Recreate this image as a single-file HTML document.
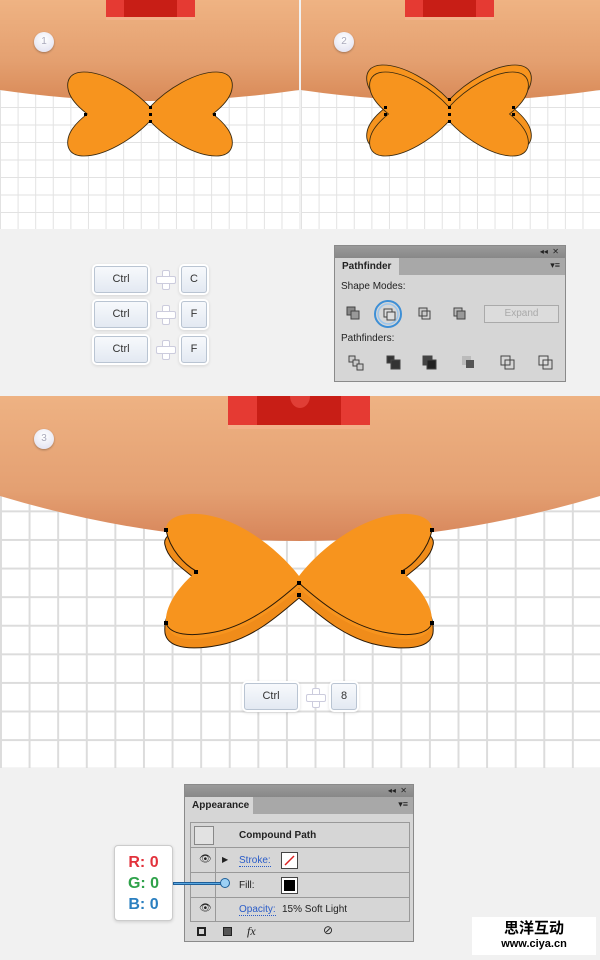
<!DOCTYPE html>
<html><head><meta charset="utf-8"><style>
*{margin:0;padding:0;box-sizing:border-box}
body{width:600px;height:960px;background:#f1f1f1;font-family:"Liberation Sans",Arial,sans-serif;position:relative;overflow:hidden}
.grid{position:absolute;background-color:#fff;background-image:linear-gradient(#e2e2e2 1px,transparent 1px),linear-gradient(90deg,#e2e2e2 1px,transparent 1px);background-size:17.6px 17.5px;background-position:0 2px}
.grid3{position:absolute;background-color:#fff;background-image:linear-gradient(#dcdcdc 2px,transparent 2px),linear-gradient(90deg,#dcdcdc 2px,transparent 2px);background-size:28.6px 28.6px;background-position:0 0}
.key{position:absolute;height:27px;background:linear-gradient(#f7f9fc,#e3e9f2);border:1px solid #b9c4d2;border-radius:3px;box-shadow:0 0 0 2px #fff,0 1px 3px 2px rgba(0,0,0,.12);font-size:11px;color:#333;text-align:center;line-height:25px}
.plus{position:absolute;width:18px;height:18px}
.plus:before,.plus:after{content:"";position:absolute;background:#fff;border:1px solid #ccd;border-radius:2px}
.plus:before{left:6px;top:0;width:6px;height:18px}
.plus:after{left:0;top:6px;width:18px;height:6px}
.num{position:absolute;width:20px;height:20px;border-radius:50%;background:radial-gradient(circle at 50% 35%,#fff,#dde);box-shadow:0 1px 2px rgba(0,0,0,.3);font-size:10px;color:#aab;text-align:center;line-height:20px}
.panel{position:absolute;background:#d6d6d6;border:1px solid #8a8a8a;font-size:10px;color:#222}
</style></head><body>

<div class="grid" style="left:0;top:0;width:299px;height:229px"></div>
<div class="grid" style="left:301px;top:0;width:299px;height:229px"></div>
<svg style="position:absolute;left:0;top:0" width="600" height="229">
<defs><linearGradient id="f" x1="0" y1="0" x2="0" y2="1"><stop offset="0" stop-color="#efb383"/><stop offset=".6" stop-color="#e4a070"/><stop offset="1" stop-color="#d98a58"/></linearGradient>
<linearGradient id="f3" x1="0" y1="0" x2="0" y2="1"><stop offset="0" stop-color="#eeb283"/><stop offset=".65" stop-color="#e4a072"/><stop offset="1" stop-color="#d7855a"/></linearGradient>
<path id="bow" d="M0,-7C-16,-26 -41,-42 -59,-42C-71,-42 -75,-34 -73,-24C-71,-14 -63,-6 -56,0C-63,6 -71,14 -73,24C-75,34 -71,42 -59,42C-41,42 -16,26 0,7C16,26 41,42 59,42C71,42 75,34 73,24C71,14 63,6 56,0C63,-6 71,-14 73,-24C75,-34 71,-42 59,-42C41,-42 16,-26 0,-7Z"/></defs>
<path d="M0,0H299V90Q150,112 0,90Z" fill="url(#f)"/>
<path d="M301,0H600V90Q450,112 301,90Z" fill="url(#f)"/>
<rect x="106" y="0" width="89" height="20" fill="#f3b08a"/><rect x="106" y="0" width="89" height="17" fill="#e53a33"/><rect x="124" y="0" width="53" height="17" fill="#c81e16"/>
<rect x="405" y="0" width="89" height="20" fill="#f3b08a"/><rect x="405" y="0" width="89" height="17" fill="#e53a33"/><rect x="423" y="0" width="53" height="17" fill="#c81e16"/>
<g fill="#f7941e" stroke="#3a2a10" stroke-width=".8">
<use href="#bow" transform="translate(150,114) scale(1.12,1)"/>
<use href="#bow" transform="translate(449,107) scale(1.12,1)"/>
<use href="#bow" transform="translate(449,114) scale(1.08,1)"/>
</g>
<g fill="#000"><rect x="149" y="106" width="3" height="3"/><rect x="149" y="113" width="3" height="3"/><rect x="149" y="120" width="3" height="3"/><rect x="84" y="113" width="3" height="3"/><rect x="213" y="113" width="3" height="3"/>
<rect x="448" y="98" width="3" height="3"/><rect x="448" y="106" width="3" height="3"/><rect x="448" y="113" width="3" height="3"/><rect x="448" y="120" width="3" height="3"/><rect x="384" y="106" width="3" height="3"/><rect x="384" y="113" width="3" height="3"/>
<rect x="512" y="106" width="3" height="3"/><rect x="512" y="113" width="3" height="3"/></g>
</svg>
<div class="num" style="left:34px;top:32px">1</div>
<div class="num" style="left:334px;top:32px">2</div>

<div class="key" style="left:94px;top:266px;width:54px">Ctrl</div><div class="plus" style="left:156px;top:270px"></div><div class="key" style="left:181px;top:266px;width:26px">C</div>
<div class="key" style="left:94px;top:301px;width:54px">Ctrl</div><div class="plus" style="left:156px;top:305px"></div><div class="key" style="left:181px;top:301px;width:26px">F</div>
<div class="key" style="left:94px;top:336px;width:54px">Ctrl</div><div class="plus" style="left:156px;top:340px"></div><div class="key" style="left:181px;top:336px;width:26px">F</div>

<div class="panel" style="left:334px;top:245px;width:232px;height:137px">
 <div style="height:12px;background:linear-gradient(#9a9a9a,#888);font-size:8px;color:#222;text-align:right;padding-right:6px;line-height:12px">◂◂ &nbsp;✕</div>
 <div style="height:17px;background:#a8a8a8;position:relative"><div style="position:absolute;left:0;top:0;width:64px;height:17px;background:#d6d6d6;font-size:10px;font-weight:bold;padding:3px 0 0 7px">Pathfinder</div><span style="position:absolute;right:5px;top:2px;font-size:9px">▾≡</span></div>
 <div style="padding:6px 0 0 6px">Shape Modes:</div>
 <svg width="230" height="80" style="position:absolute;left:0;top:50px">
  <g stroke="#444" fill="#aaa" stroke-width="1">
   <rect x="12" y="11" width="8" height="8" fill="#888"/><rect x="16" y="15" width="8" height="8" fill="#999"/>
   <circle cx="53" cy="18" r="13" fill="none" stroke="#3d8fd6" stroke-width="2"/><circle cx="53" cy="18" r="10" fill="none" stroke="#9cc6ec" stroke-width="1.5"/>
   <rect x="49" y="13" width="8" height="8" fill="#ddd"/><rect x="52" y="16" width="8" height="8" fill="#ddd"/>
   <rect x="84" y="12" width="8" height="8" fill="#ccc"/><rect x="87" y="15" width="8" height="8" fill="none"/>
   <rect x="119" y="12" width="8" height="8" fill="#bbb"/><rect x="122" y="15" width="8" height="8" fill="#999"/>
   <rect x="14" y="60" width="6" height="6" fill="#ccc"/><rect x="18" y="64" width="6" height="6" fill="#ccc"/><rect x="22" y="68" width="6" height="6" fill="#ccc"/>
   <rect x="52" y="60" width="7" height="7" fill="#333"/><rect x="56" y="64" width="9" height="9" fill="#333"/>
   <rect x="88" y="60" width="9" height="9" fill="#444"/><rect x="92" y="64" width="9" height="9" fill="#222"/>
   <rect x="127" y="60" width="9" height="9" fill="#bbb" stroke="none"/><rect x="131" y="64" width="8" height="8" fill="#555" stroke="none"/>
   <rect x="166" y="60" width="9" height="9" fill="none"/><rect x="170" y="64" width="9" height="9" fill="none"/>
   <rect x="204" y="60" width="9" height="9" fill="#ddd"/><rect x="208" y="64" width="9" height="9" fill="none"/>
  </g>
 </svg>
 <div style="position:absolute;left:149px;top:59px;width:75px;height:18px;border:1px solid #aaa;background:#dcdcdc;color:#aaa;text-align:center;line-height:16px">Expand</div>
 <div style="position:absolute;left:6px;top:87px">Pathfinders:</div>
</div>

<div class="grid3" style="left:0;top:396px;width:600px;height:372px;background-position:0 0"></div>
<svg style="position:absolute;left:0;top:396px" width="600" height="372">
<path d="M0,0H600V100Q300,190 0,100Z" fill="url(#f3)"/>
<rect x="228" y="0" width="142" height="33" fill="#f3b08a"/><rect x="228" y="0" width="142" height="29" fill="#e53a33"/><rect x="257" y="0" width="84" height="29" fill="#c81e16"/><ellipse cx="300" cy="0" rx="10" ry="12" fill="#e03e36"/>
<g transform="translate(0,-396)" stroke="#2a1a08" stroke-width="1">
<path fill="#f08c1a" d="M299,588C275,560 230,526 190,528C170,530 163,538 165,545C168,560 185,570 194,578C176,595 163,615 165,633C168,650 195,650 220,645C255,638 282,612 299,598C316,612 343,638 378,645C403,650 430,650 433,633C435,615 422,595 404,578C413,570 430,560 433,545C435,538 428,530 408,528C368,526 323,560 299,588Z"/>
<path fill="#f7941e" stroke="none" d="M299,576C275,545 230,512 190,514C170,515 163,525 167,535C172,552 185,565 196,572C180,585 165,605 166,622C168,640 190,642 215,636C250,628 280,605 299,588C318,605 348,628 383,636C408,642 430,640 432,622C433,605 418,585 402,572C413,565 426,552 431,535C435,525 428,515 408,514C368,512 323,545 299,576Z"/>
<path fill="none" d="M166,530C170,550 185,565 196,571M166,623C170,635 190,637 215,632C250,625 280,600 299,583C318,600 348,625 383,632C408,637 428,635 432,623M432,530C428,550 413,565 402,571"/>
</g>
<g fill="#000"><rect x="164" y="132" width="4" height="4"/><rect x="194" y="174" width="4" height="4"/><rect x="164" y="225" width="4" height="4"/><rect x="297" y="185" width="4" height="4"/><rect x="297" y="197" width="4" height="4"/><rect x="430" y="132" width="4" height="4"/><rect x="401" y="174" width="4" height="4"/><rect x="430" y="225" width="4" height="4"/></g>
</svg>
<div class="num" style="left:34px;top:429px">3</div>
<div class="key" style="left:244px;top:683px;width:54px">Ctrl</div><div class="plus" style="left:306px;top:688px"></div><div class="key" style="left:331px;top:683px;width:26px">8</div>

<div class="panel" style="left:184px;top:784px;width:230px;height:158px">
 <div style="height:12px;background:linear-gradient(#9a9a9a,#888);font-size:8px;text-align:right;padding-right:6px;line-height:12px">◂◂ &nbsp;✕</div>
 <div style="height:17px;background:#a8a8a8;position:relative"><div style="position:absolute;left:0;top:0;width:68px;height:17px;background:#d6d6d6;font-weight:bold;padding:3px 0 0 7px">Appearance</div><span style="position:absolute;right:5px;top:2px;font-size:9px">▾≡</span></div>
 <div style="position:absolute;left:5px;top:37px;width:220px;height:100px;border:1px solid #999">
  <div style="height:25px;border-bottom:1px solid #999;position:relative"><div style="position:absolute;left:3px;top:3px;width:20px;height:19px;border:1px solid #888;background:#e2e2e2"></div><b style="position:absolute;left:48px;top:7px">Compound Path</b></div>
  <div style="height:25px;border-bottom:1px solid #999;position:relative"><span style="position:absolute;left:8px;top:6px">👁</span><span style="position:absolute;left:31px;top:7px;font-size:8px">▶</span><span style="position:absolute;left:48px;top:7px;color:#2a5cc8;border-bottom:1px dotted #2a5cc8">Stroke:</span><div style="position:absolute;left:90px;top:4px;width:17px;height:17px;border:1px solid #444;background:#fff;box-shadow:inset 0 0 0 2px #fff"><svg width="15" height="15"><line x1="3" y1="12" x2="12" y2="3" stroke="#d22" stroke-width="1.5"/></svg></div></div>
  <div style="height:25px;border-bottom:1px solid #999;position:relative"><span style="position:absolute;left:48px;top:7px">Fill:</span><div style="position:absolute;left:90px;top:4px;width:17px;height:17px;border:1px solid #444;background:#000;box-shadow:inset 0 0 0 2px #fff"></div></div>
  <div style="height:24px;position:relative"><span style="position:absolute;left:8px;top:5px">👁</span><span style="position:absolute;left:48px;top:6px;color:#2a5cc8;border-bottom:1px dotted #2a5cc8">Opacity:</span><span style="position:absolute;left:91px;top:6px">15% Soft Light</span></div>
  <div style="position:absolute;left:24px;top:25px;width:1px;height:74px;background:#999"></div>
 </div>
 <div style="position:absolute;left:12px;top:142px;width:9px;height:9px;border:2px solid #222"></div>
 <div style="position:absolute;left:38px;top:142px;width:9px;height:9px;border:1px solid #222;background:#555"></div>
 <i style="position:absolute;left:62px;top:139px;font-size:12px;font-family:'Liberation Serif',serif">fx</i>
 <span style="position:absolute;left:138px;top:138px;font-size:12px">⊘</span>
</div>
<div style="position:absolute;left:114px;top:845px;width:59px;height:76px;background:#fff;border:1px solid #ccc;border-radius:4px;box-shadow:0 1px 3px rgba(0,0,0,.15);font:bold 16px/21px 'Liberation Sans',sans-serif;text-align:center;padding-top:6px">
 <div style="color:#e2323c">R: 0</div><div style="color:#2fa24a">G: 0</div><div style="color:#2a7fc0">B: 0</div></div>
<div style="position:absolute;left:173px;top:882px;width:50px;height:3px;background:#5aa7e0;border:1px solid #1e5f99"></div>
<div style="position:absolute;left:220px;top:878px;width:10px;height:10px;border-radius:50%;background:#9cd0f5;border:1px solid #1e5f99"></div>

<div style="position:absolute;left:472px;top:917px;width:124px;height:38px;background:#fff;text-align:center;font:bold 15px/18px 'Noto Sans CJK SC',sans-serif;padding-top:2px">思洋互动<div style="font:bold 11px/14px 'Liberation Sans',sans-serif">www.ciya.cn</div></div>
</body></html>
